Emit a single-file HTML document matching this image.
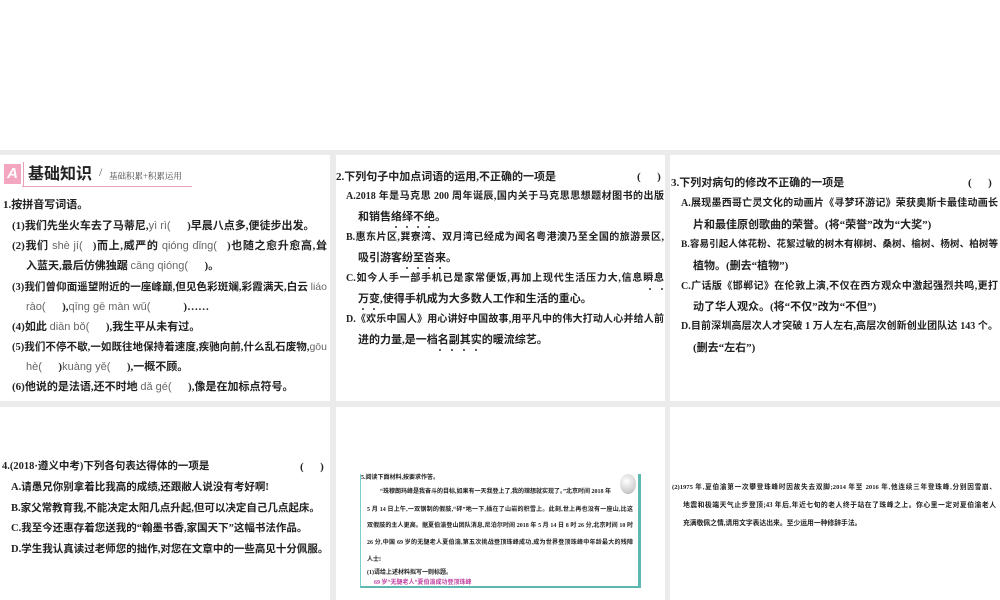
<!DOCTYPE html>
<html><head><meta charset="utf-8">
<style>
*{margin:0;padding:0;box-sizing:border-box}
body{width:1000px;height:600px;background:#fff;position:relative;overflow:hidden;font-family:"Liberation Serif","Noto Sans CJK SC",sans-serif;color:#222}
.g{position:absolute;background:#ebebeb}
.l{position:absolute;white-space:nowrap;font-size:11px;font-weight:bold;line-height:14px}
.j{text-align:justify;text-align-last:justify;white-space:normal;height:14px;overflow:hidden}
.py{font-family:"Liberation Sans","Noto Sans CJK SC",sans-serif;font-weight:normal;color:#666}
.s{position:absolute;white-space:nowrap;font-size:7px;font-weight:bold;line-height:10px}
.s.j{height:10px}
.dot{position:absolute;width:2px;height:2px;background:#333;border-radius:50%}
.p2{font-size:10px}
</style></head><body>
<div class="g" style="left:0;top:150px;width:1000px;height:5px"></div>
<div class="g" style="left:0;top:401px;width:1000px;height:6px"></div>
<div class="g" style="left:330px;top:150px;width:6px;height:450px"></div>
<div class="g" style="left:665px;top:150px;width:5px;height:450px"></div>

<div style="position:absolute;left:4px;top:164px;width:17px;height:20px;background:#f2a6c0;color:#fff;font:bold italic 15px 'Liberation Sans',sans-serif;text-align:center;line-height:20px">A</div>
<div style="position:absolute;left:22px;top:186px;width:170px;height:1px;background:#e8a0b8"></div>
<div style="position:absolute;left:23px;top:162px;width:1px;height:24px;background:#e8a0b8"></div>
<div class="l" style="left:28px;top:162px;font-size:16px;line-height:20px;font-family:'Noto Sans CJK SC',sans-serif">基础知识</div>
<div class="l" style="left:99px;top:165px;font-size:12px;font-weight:normal;color:#555">/</div>
<div class="l" style="left:109px;top:169px;font-size:8.5px;font-weight:normal;color:#444;font-family:'Noto Serif CJK SC',serif">基础积累+积累运用</div>

<div class="l" style="left:3px;top:198px">1.按拼音写词语。</div>
<div class="l" style="left:12px;top:219px">(1)我们先坐火车去了马蒂尼,<span class="py">yì rì(</span>&nbsp;&nbsp;&nbsp;&nbsp;&nbsp;&nbsp;)早晨八点多,便徒步出发。</div>
<div class="l j" style="left:12px;top:239px;width:315px">(2)我们 <span class="py">shè jí(</span>&nbsp;&nbsp;&nbsp;)而上,威严的 <span class="py">qióng dǐng(</span>&nbsp;&nbsp;&nbsp;)也随之愈升愈高,耸</div>
<div class="l" style="left:26px;top:259px">入蓝天,最后仿佛独踞 <span class="py">cāng qióng(</span>&nbsp;&nbsp;&nbsp;&nbsp;&nbsp;&nbsp;)。</div>
<div class="l j" style="left:12px;top:280px;width:315px;font-size:10.5px">(3)我们曾仰面遥望附近的一座峰巅,但见色彩斑斓,彩霞满天,白云 <span class="py">liáo</span></div>
<div class="l" style="left:26px;top:300px"><span class="py">rào(</span>&nbsp;&nbsp;&nbsp;&nbsp;&nbsp;&nbsp;),<span class="py">qīng gē màn wǔ(</span>&nbsp;&nbsp;&nbsp;&nbsp;&nbsp;&nbsp;&nbsp;&nbsp;&nbsp;&nbsp;&nbsp;&nbsp;)……</div>
<div class="l" style="left:12px;top:320px">(4)如此 <span class="py">diān bǒ(</span>&nbsp;&nbsp;&nbsp;&nbsp;&nbsp;&nbsp;),我生平从未有过。</div>
<div class="l j" style="left:12px;top:340px;width:315px;font-size:10.5px">(5)我们不停不歇,一如既往地保持着速度,疾驰向前,什么乱石废物,<span class="py">gōu</span></div>
<div class="l" style="left:26px;top:360px"><span class="py">hè(</span>&nbsp;&nbsp;&nbsp;&nbsp;&nbsp;&nbsp;)<span class="py">kuàng yě(</span>&nbsp;&nbsp;&nbsp;&nbsp;&nbsp;&nbsp;),一概不顾。</div>
<div class="l" style="left:12px;top:380px">(6)他说的是法语,还不时地 <span class="py">dǎ gé(</span>&nbsp;&nbsp;&nbsp;&nbsp;&nbsp;&nbsp;),像是在加标点符号。</div>

<div class="l" style="left:336px;top:170px">2.下列句子中加点词语的运用,不正确的一项是</div>
<div class="l" style="left:637px;top:170px">(&nbsp;&nbsp;&nbsp;&nbsp;&nbsp;&nbsp;)</div>
<div class="l j p2" style="left:346px;top:190px;width:318px">A.2018 年是马克思 200 周年诞辰,国内关于马克思思想题材图书的出版</div>
<div class="l" style="left:358px;top:210px">和销售络绎不绝。</div>
<div class="l j p2" style="left:346px;top:231px;width:318px">B.惠东片区,巽寮湾、双月湾已经成为闻名粤港澳乃至全国的旅游景区,</div>
<div class="l" style="left:358px;top:251px">吸引游客纷至沓来。</div>
<div class="l j p2" style="left:346px;top:272px;width:318px">C.如今人手一部手机已是家常便饭,再加上现代生活压力大,信息瞬息</div>
<div class="l" style="left:358px;top:292px">万变,使得手机成为大多数人工作和生活的重心。</div>
<div class="l j p2" style="left:346px;top:313px;width:318px">D.《欢乐中国人》用心讲好中国故事,用平凡中的伟大打动人心并给人前</div>
<div class="l" style="left:358px;top:333px">进的力量,是一档名副其实的暖流综艺。</div>
<div class="dot" style="left:395px;top:226px"></div><div class="dot" style="left:406px;top:226px"></div><div class="dot" style="left:417px;top:226px"></div><div class="dot" style="left:428px;top:226px"></div>
<div class="dot" style="left:406px;top:267px"></div><div class="dot" style="left:417px;top:267px"></div><div class="dot" style="left:428px;top:267px"></div><div class="dot" style="left:439px;top:267px"></div>
<div class="dot" style="left:649px;top:288px"></div><div class="dot" style="left:661px;top:288px"></div>
<div class="dot" style="left:362px;top:308px"></div><div class="dot" style="left:373px;top:308px"></div>
<div class="dot" style="left:439px;top:349px"></div><div class="dot" style="left:451px;top:349px"></div><div class="dot" style="left:463px;top:349px"></div><div class="dot" style="left:475px;top:349px"></div>

<div class="l" style="left:671px;top:176px">3.下列对病句的修改不正确的一项是</div>
<div class="l" style="left:968px;top:176px">(&nbsp;&nbsp;&nbsp;&nbsp;&nbsp;&nbsp;)</div>
<div class="l j p2" style="left:681px;top:197px;width:317px">A.展现墨西哥亡灵文化的动画片《寻梦环游记》荣获奥斯卡最佳动画长</div>
<div class="l" style="left:693px;top:218px">片和最佳原创歌曲的荣誉。(将“荣誉”改为“大奖”)</div>
<div class="l j" style="left:681px;top:238px;width:317px;font-size:9.5px">B.容易引起人体花粉、花絮过敏的树木有柳树、桑树、榆树、杨树、柏树等</div>
<div class="l" style="left:693px;top:259px">植物。(删去“植物”)</div>
<div class="l j p2" style="left:681px;top:280px;width:317px">C.广话版《邯郸记》在伦敦上演,不仅在西方观众中激起强烈共鸣,更打</div>
<div class="l" style="left:693px;top:300px">动了华人观众。(将“不仅”改为“不但”)</div>
<div class="l j p2" style="left:681px;top:320px;width:317px">D.目前深圳高层次人才突破 1 万人左右,高层次创新创业团队达 143 个。</div>
<div class="l" style="left:693px;top:341px">(删去“左右”)</div>

<div class="l" style="left:2px;top:460px;font-size:10.5px">4.(2018·遵义中考)下列各句表达得体的一项是</div>
<div class="l" style="left:300px;top:460px">(&nbsp;&nbsp;&nbsp;&nbsp;&nbsp;&nbsp;)</div>
<div class="l" style="left:11px;top:481px;font-size:10.5px">A.请愚兄你别拿着比我高的成绩,还跟敝人说没有考好啊!</div>
<div class="l" style="left:11px;top:502px;font-size:10.5px">B.家父常教育我,不能决定太阳几点升起,但可以决定自己几点起床。</div>
<div class="l" style="left:11px;top:522px;font-size:10.5px">C.我至今还惠存着您送我的“翰墨书香,家国天下”这幅书法作品。</div>
<div class="l" style="left:11px;top:543px;font-size:10.5px">D.学生我认真读过老师您的拙作,对您在文章中的一些高见十分佩服。</div>

<div style="position:absolute;left:360px;top:474px;width:281px;height:114px;border-left:1px solid #7cc;border-right:3px solid #5cb8b0;border-bottom:2px solid #5cb8b0"></div>
<div style="position:absolute;left:620px;top:474px;width:16px;height:20px;border-radius:50%;background:radial-gradient(circle at 40% 35%,#fff,#ccc 70%,#999);"></div>
<div class="s" style="left:361px;top:473px;font-size:6px">5.阅读下面材料,按要求作答。</div>
<div class="s" style="left:380px;top:487px;font-size:6px">“珠穆朗玛峰是我奋斗的目标,如果有一天我登上了,我的理想就实现了。”北京时间 2018 年</div>
<div class="s j" style="left:367px;top:505px;width:266px;font-size:6px">5 月 14 日上午,一双钢制的假肢,“砰”地一下,插在了山岩的积雪上。此刻,世上再也没有一座山,比这</div>
<div class="s j" style="left:367px;top:521px;width:266px;font-size:6px">双假肢的主人更高。据夏伯渝登山团队消息,尼泊尔时间 2018 年 5 月 14 日 8 时 26 分,北京时间 10 时</div>
<div class="s j" style="left:367px;top:538px;width:266px;font-size:6px">26 分,中国 69 岁的无腿老人夏伯渝,第五次挑战登顶珠峰成功,成为世界登顶珠峰中年龄最大的残障</div>
<div class="s" style="left:367px;top:555px;font-size:6px">人士!</div>
<div class="s" style="left:367px;top:568px;font-size:6px">(1)请给上述材料拟写一则标题。</div>
<div class="s" style="left:374px;top:578px;font-size:6px;color:#c040a0">69 岁“无腿老人”夏伯渝成功登顶珠峰</div>

<div class="s j" style="left:672px;top:483px;width:324px;font-size:6.6px">(2)1975 年,夏伯渝第一次攀登珠峰时因故失去双脚;2014 年至 2016 年,他连续三年登珠峰,分别因雪崩、</div>
<div class="s j" style="left:683px;top:501px;width:313px;font-size:6.8px">地震和极端天气止步登顶;43 年后,年近七旬的老人终于站在了珠峰之上。你心里一定对夏伯渝老人</div>
<div class="s" style="left:683px;top:519px;font-size:6.8px">充满敬佩之情,请用文字表达出来。至少运用一种修辞手法。</div>
</body></html>
